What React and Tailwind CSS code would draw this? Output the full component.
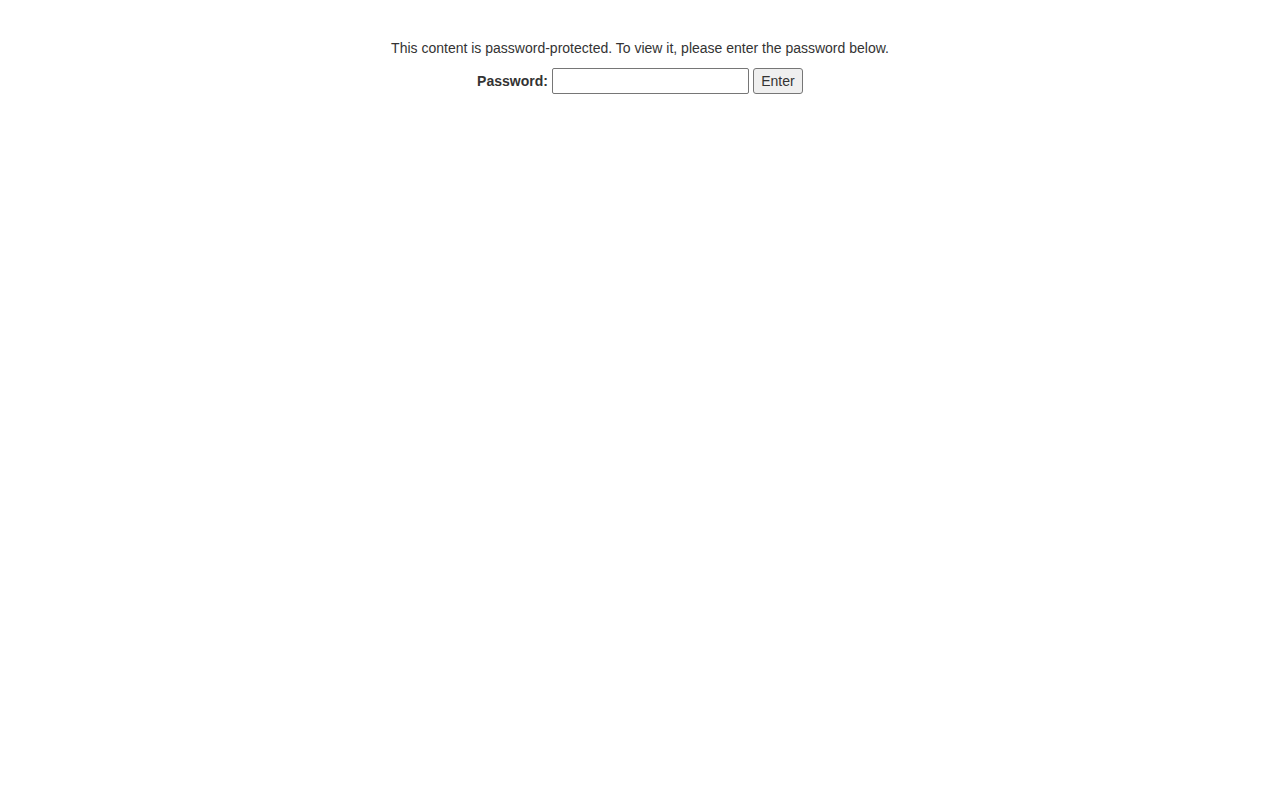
import React, { useState } from 'react';

const App = () => {
  const [password, setPassword] = useState('');

  return (
    <div className="min-h-screen bg-white text-[#333333] font-['Liberation_Sans',Arial,sans-serif] text-[14px]">
      <form
        className="flex flex-col items-center pt-[38px]"
        onSubmit={e => e.preventDefault()}
      >
        <p className="leading-[20px]">
          This content is password-protected. To view it, please enter the password below.
        </p>
        <div className="flex items-center mt-[10px]">
          <label htmlFor="pwbox" className="font-bold leading-[20px]">Password:</label>
          <input
            id="pwbox"
            type="password"
            value={password}
            onChange={e => setPassword(e.target.value)}
            className="ml-[4px] w-[197px] h-[26px] border border-[#767676] rounded-[2px] px-1 bg-white outline-none"
          />
          <button
            type="submit"
            className="ml-[4px] w-[50px] h-[26px] border border-[#767676] rounded-[3px] bg-[#efefef] text-[#333333] leading-none"
          >
            Enter
          </button>
        </div>
      </form>
    </div>
  );
};

export default App;
